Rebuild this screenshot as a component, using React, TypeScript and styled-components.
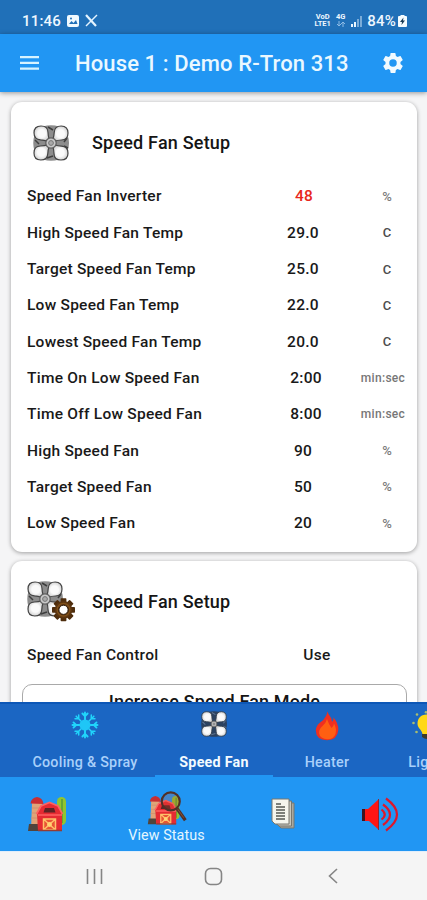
import React from "react";
import styled, { createGlobalStyle } from "styled-components";

const GlobalStyle = createGlobalStyle`
  *, *::before, *::after { box-sizing: border-box; }
  body { margin: 0; font-family: Roboto, "Liberation Sans", sans-serif; overflow: hidden; }
  svg { display: block; flex: none; }
`;

const Screen = styled.div`
  width: 427px;
  height: 900px;
  display: flex;
  flex-direction: column;
  overflow: hidden;
  background: #f5f5f6;
`;

const StatusBar = styled.header`
  height: 34px;
  flex: none;
  padding: 7px 20px 0 22px;
  display: flex;
  align-items: center;
  background: #2070b8;
  color: #eef7ff;
`;

const Clock = styled.span`
  width: 44px;
  font-size: 15px;
  font-weight: 500;
  letter-spacing: 0.2px;
`;

const StatusIcons = styled.div<{ $end?: boolean }>`
  display: flex;
  align-items: center;
  gap: ${(p) => (p.$end ? 5 : 6)}px;
  margin-left: ${(p) => (p.$end ? "auto" : "1px")};
`;

const NetworkLabel = styled.span`
  display: flex;
  flex-direction: column;
  align-items: center;
  font-size: 7.5px;
  line-height: 6.5px;
  font-weight: 700;
`;

const Battery = styled.span`
  display: flex;
  align-items: center;
  gap: 2px;
  font-size: 15px;
  font-weight: 500;
  letter-spacing: 0.2px;
`;

const AppBar = styled.div`
  height: 58px;
  flex: none;
  display: flex;
  align-items: center;
  padding: 0 22px 0 20px;
  background: #2196f3;
  box-shadow: 0 1px 5px rgba(0, 0, 0, 0.4);
  z-index: 1;
`;

const AppTitle = styled.h1`
  flex: 1;
  margin: 1px 0 0 36px;
  font-size: 22px;
  font-weight: 500;
  letter-spacing: 0.12px;
  line-height: 28px;
  white-space: nowrap;
  color: #eaf8ff;
`;

const Content = styled.main`
  flex: 1;
  min-height: 0;
  overflow: hidden;
  padding: 10px 10px 0 11px;
  display: flex;
  flex-direction: column;
  gap: 9px;
`;

const Card = styled.section<{ $height: number }>`
  height: ${(p) => p.$height}px;
  flex: none;
  background: #fff;
  border-radius: 11px;
  box-shadow: 0 1px 4px rgba(0, 0, 0, 0.36);
`;

const CardHeader = styled.div`
  height: 76.3px;
  display: flex;
  align-items: center;
  padding: 5px 16px 0 16px;
`;

const CardIcon = styled.div<{ $indent: number }>`
  width: 65px;
  padding-left: ${(p) => p.$indent}px;
`;

const CardTitle = styled.h2`
  margin: 0;
  font-size: 18px;
  font-weight: 500;
  letter-spacing: 0.2px;
  line-height: 24px;
  color: #151515;
`;

const Row = styled.div`
  height: 36.3px;
  display: grid;
  grid-template-columns: 242px 100px 64px;
  align-items: center;
  font-size: 15.5px;
  font-weight: 500;
  color: #191919;
`;

const RowLabel = styled.span`
  padding-left: 16px;
  letter-spacing: 0.25px;
  white-space: nowrap;
`;

const RowValue = styled.span<{ $shift?: number; $alert?: boolean }>`
  padding-left: ${(p) => (p.$shift ?? 0) * 2}px;
  text-align: center;
  letter-spacing: 0.3px;
  color: ${(p) => (p.$alert ? "#e8281c" : "inherit")};
`;

const RowUnit = styled.span<{ $tone: string; $wide?: boolean }>`
  text-align: center;
  padding-left: ${(p) => (p.$wide ? 0 : 4)}px;
  padding-right: ${(p) => (p.$wide ? 4 : 0)}px;
  font-size: ${(p) => (p.$wide ? 12 : 13)}px;
  letter-spacing: ${(p) => (p.$wide ? 0.3 : 0)}px;
  color: ${(p) => p.$tone};
`;

const ModeButton = styled.button`
  display: block;
  width: 385px;
  height: 36px;
  margin: 10.5px 0 0 11px;
  padding: 0;
  border: 1.3px solid #a9a9a9;
  border-radius: 10px;
  background: #fff;
  color: #151515;
  font: 500 18px/22px Roboto, sans-serif;
  letter-spacing: 0.15px;
  text-align: center;
`;

const Tabs = styled.nav`
  height: 75px;
  flex: none;
  display: flex;
  overflow: hidden;
  background: #1b66c3;
  border-top: 2px solid #0c57b7;
  padding-left: 15px;
`;

const Tab = styled.div<{ $width: number; $active?: boolean }>`
  width: ${(p) => p.$width}px;
  flex: none;
  display: flex;
  flex-direction: column;
  align-items: center;
  padding-top: 4px;
  border-bottom: 2px solid ${(p) => (p.$active ? "#2196f3" : "transparent")};
  color: ${(p) => (p.$active ? "#f3fbff" : "#a9d0fa")};
  font-size: 14.3px;
  font-weight: ${(p) => (p.$active ? 700 : 500)};
  letter-spacing: ${(p) => (p.$active ? 0.25 : 0.26)}px;
  line-height: 20px;
  white-space: nowrap;
`;

const TabIcon = styled.span`
  height: 44px;
  padding-top: 3px;
`;

const BottomNav = styled.nav`
  height: 74px;
  flex: none;
  display: grid;
  grid-template-columns: 107px 119px 115px 1fr;
  background: #2196f3;
`;

const NavItem = styled.div<{ $top: number; $indent?: number }>`
  display: flex;
  flex-direction: column;
  align-items: center;
  padding-top: ${(p) => p.$top}px;
  padding-right: ${(p) => p.$indent ?? 0}px;
  color: #e4f6ff;
  font-size: 14.3px;
  line-height: 19px;
  letter-spacing: 0.1px;
  white-space: nowrap;
`;

const SystemNav = styled.footer`
  height: 49px;
  flex: none;
  display: grid;
  grid-template-columns: 154px 84px 156px;
  justify-items: center;
  align-items: center;
  padding-left: 17px;
  background: #f5f5f5;
  border-top: 1px solid #e1eefb;
`;

/* Four-blade ventilation fan, optionally with a settings cog beside it. */
function FanIcon({ size, dark, cog }: { size: number; dark?: boolean; cog?: boolean }) {
  const id = dark ? "fanDark" : cog ? "fanCog" : "fan";
  return (
    <svg width={cog ? (size * 48) / 36 : size} height={cog ? (size * 41) / 36 : size} viewBox={cog ? "0 0 48 41" : "0 0 36 36"}>
      <defs>
        <radialGradient id={id} cx="50%" cy="48%" r="56%">
          <stop offset="0.45" stopColor="#fafafa" />
          <stop offset="0.8" stopColor="#dadada" />
          <stop offset="1" stopColor="#8c8c8c" />
        </radialGradient>
      </defs>
      <path d="M10 1.500Q18-1 26 1.500V9L18 15l-8-6zM10 34.500Q18 37 26 34.500V27l-8-6-8 6zM1.500 10Q-1 18 1.500 26h8l6-8-6-8zM34.500 10q3 8 0 16h-8l-6-8 6-8z" fill={dark ? "#2c4260" : "#8c8c8c"} />
      <path d="M15 2l5 3M14 33l6-2M2 15l4 4M31 17l3-4M31 21l4 2" stroke={dark ? "#5f7590" : "#3e3e3e"} strokeWidth="1.500" />
      {[0, 90, 180, 270].map((a) => (
        <path
          key={a}
          transform={`rotate(${a} 18 18)`}
          d="M1 7.800Q1 1 8 1Q15 1 15 7.500Q15 11.500 16.500 15L15 16.500Q11 14.800 7.500 14.800Q1 14.500 1 7.800Z"
          fill={`url(#${id})`}
          stroke={dark ? "#34404c" : "#444"}
          strokeWidth="1.200"
        />
      ))}
      <circle cx="18" cy="18" r={dark ? 4 : 5.2} fill="#c8c8c8" stroke="#5c5c5c" strokeWidth="1.200" />
      <circle cx="18" cy="18" r={dark ? 1.5 : 2.4} fill="#aaa" stroke="#777" />
      {cog && (
        <g>
          {[0, 45, 90, 135].map((a) => (
            <rect key={a} x="33.600" y="17.300" width="5.800" height="23" rx="0.800" fill="#4e2d0d" transform={`rotate(${a} 36.500 28.800)`} />
          ))}
          <circle cx="36.500" cy="28.800" r="8.800" fill="#5b3511" />
          <circle cx="36.500" cy="28.800" r="6.400" fill="none" stroke="#805019" strokeWidth="1.300" />
          <circle cx="36.500" cy="28.800" r="4.600" fill="#fff" stroke="#2e1907" />
        </g>
      )}
    </svg>
  );
}

function Snowflake() {
  return (
    <svg width="28" height="28" viewBox="-14 -14 28 28" fill="none" stroke="#20d4fb" strokeLinecap="round">
      {[0, 45, 90, 135, 180, 225, 270, 315].map((a) => (
        <path key={a} transform={`rotate(${a})`} d="M0 0V-12.500M-2.600-11.500L0-8.800L2.600-11.500" strokeWidth={a % 90 ? 1.500 : 1.900} />
      ))}
      <circle r="5.500" fill="#1fc6f6" stroke="none" />
    </svg>
  );
}

function Flame() {
  return (
    <svg width="24" height="30" viewBox="0 0 24 30">
      <path d="M12.500 .5Q13 3 15.500 6Q17 8 17 11Q18.800 9.500 18.500 6.500Q23.500 12 23.300 19Q22.500 29 12 29.300Q1 29 .8 19.500Q1 15 4.500 12Q9.500 8.500 11 5Q12 3 12.500 .5Z" fill="#f02f20" />
      <path d="M12 8Q14 14 16.500 17Q18.500 16 19 12.500Q22 18 20.500 23Q18.500 28.300 12.500 28.300Q5 28 4 22Q4 18 7.500 15Q11 12 12 8Z" fill="#ff5f12" />
    </svg>
  );
}

function Bulb() {
  return (
    <svg width="34" height="30" viewBox="0 0 34 30">
      <path d="M18.500 3.500C12.500 3.500 9.500 7.500 9.500 12.500C9.500 17.500 13.500 18 14.500 23H23.500C24.500 18 28.500 17 28.500 12.500C28.500 7.500 24.500 3.500 18.500 3.500Z" fill="#ffd817" />
      <path d="M14 23h10v3q-5 4-10 0z" fill="#3c392b" />
      <g fill="#a8bd70">
        <circle cx="9" cy="3.500" r="1.300" /><circle cx="5.500" cy="12" r="1.300" /><circle cx="8.500" cy="21" r="1.300" /><circle cx="18" cy="1.300" r="1.300" />
      </g>
    </svg>
  );
}

function Barn({ lens }: { lens?: boolean }) {
  return (
    <svg width={lens ? 40 : 39} height={lens ? 35 : 36} viewBox={lens ? "-1 -5 48 42" : "0 0 39 36"}>
      <rect x="29" y="1" width="9" height="28" rx="4.500" fill="#92c52f" />
      <path d="M34 3v24" stroke="#65a536" strokeWidth="2" />
      <path d="M4 7h10v27H3z" fill="#dfa478" />
      <path d="M4 12h9M4 17h9M3 22h9" stroke="#cf9070" />
      <path d="M2.500 7.500Q3 2 9 1q6 1 6.500 7z" fill="#c92e32" />
      <path d="M1 28h9v7H0z" fill="#51443c" />
      <path d="M9 18l4-8 8.500-4L30 10l4 8v17H10z" fill="#e52b32" />
      <path d="M8.500 18l4.500-8 8.500-3.500L30 10l4.500 8M10 19h24" fill="none" stroke="#ff6160" strokeWidth="1.700" />
      <path d="M17 12h9l1.500 4.500h-12z" fill="#5d2424" />
      <path d="M15.500 23h12v11h-12zM15.500 23l12 11M27.500 23l-12 11" fill="#e95435" stroke="#ffc069" strokeWidth="1.500" />
      <circle cx="21.500" cy="28.500" r="2.400" fill="#ffd373" />
      <path d="M10 34.500h24" stroke="#963b32" strokeWidth="1.500" />
      {lens && (
        <g fill="none" stroke="#513027">
          <circle cx="27.500" cy="7.500" r="10.800" strokeWidth="2.600" fill="#c94930" fillOpacity=".22" />
          <path d="M35 16L45 30" strokeWidth="4" />
          <path d="M36 17l7 10" stroke="#8a5537" strokeWidth="1.100" />
        </g>
      )}
    </svg>
  );
}

function Documents() {
  return (
    <svg width="26" height="31" viewBox="0 0 26 31" stroke="#78776f">
      <path d="M7 5h16v25H10l-3-3z" fill="#aaa99f" />
      <path d="M4.500 3h16v25H8l-3.500-3z" fill="#c8c7bd" />
      <path d="M1 1h17v25H4l-3-3z" fill="#f5f5ed" />
      <path d="M5 6h5M5 9h9M5 12h9M5 15h9M5 18h9M5 21h9" stroke="#555853" strokeWidth="1.400" />
    </svg>
  );
}

function Speaker() {
  return (
    <svg width="38" height="35" viewBox="0 0 38 35">
      <path d="M1 12h5v12H1z" fill="#3d1520" />
      <path d="M4 12h3L18 2v31L8 24H4z" fill="#ff1514" />
      <path d="M17.500 2v31" stroke="#98222f" />
      <g fill="none" stroke="#de172a" strokeWidth="2.200">
        <path d="M20.500 12.500Q27 17.500 20.500 22.500" />
        <path d="M22 7.500Q36 17.500 22 28" />
        <path d="M25 1.500Q47 17.500 25 33.500" />
      </g>
    </svg>
  );
}

type Reading = { label: string; value: string; unit: string; shift?: number; alert?: boolean; tone: string };

const readings: Reading[] = [
  { label: "Speed Fan Inverter", value: "48", unit: "%", shift: 1, alert: true, tone: "#7b7b7b" },
  { label: "High Speed Fan Temp", value: "29.0", unit: "C", tone: "#4c4c4c" },
  { label: "Target Speed Fan Temp", value: "25.0", unit: "C", tone: "#4c4c4c" },
  { label: "Low Speed Fan Temp", value: "22.0", unit: "C", tone: "#4c4c4c" },
  { label: "Lowest Speed Fan Temp", value: "20.0", unit: "C", tone: "#4c4c4c" },
  { label: "Time On Low Speed Fan", value: "2:00", unit: "min:sec", shift: 3, tone: "#777" },
  { label: "Time Off Low Speed Fan", value: "8:00", unit: "min:sec", shift: 3, tone: "#777" },
  { label: "High Speed Fan", value: "90", unit: "%", tone: "#7b7b7b" },
  { label: "Target Speed Fan", value: "50", unit: "%", tone: "#7b7b7b" },
  { label: "Low Speed Fan", value: "20", unit: "%", tone: "#7b7b7b" },
];

export default function App() {
  return (
    <Screen>
      <GlobalStyle />
      <StatusBar>
        <Clock>11:46</Clock>
        <StatusIcons>
          <svg width="12" height="12" viewBox="0 0 12 12">
            <rect width="12" height="12" rx="2" fill="#f0faff" />
            <path d="M2 9l2.500-3 2 2L9 5l1.500 4z" fill="#2070b8" />
            <circle cx="4" cy="3.500" r="1" fill="#2070b8" />
          </svg>
          <svg width="13" height="13" viewBox="0 0 13 13" fill="none" stroke="#e4f4ff">
            <path d="M1 1l10 11" strokeWidth="2.200" />
            <path d="M12 1L1 12" strokeWidth="1.500" />
          </svg>
        </StatusIcons>
        <StatusIcons $end>
          <NetworkLabel><span>VoD</span><span>LTE1</span></NetworkLabel>
          <NetworkLabel>
            <span>4G</span>
            <svg width="8" height="6" viewBox="0 0 8 6" stroke="#8dbbe5" fill="none"><path d="M2 0v5M0 3l2 2 2-2M6 6V1M4 3l2-2 2 2" /></svg>
          </NetworkLabel>
          <svg width="12" height="12" viewBox="0 0 12 12" fill="#e9f6ff">
            <path d="M1 9h2v3H1zM4 7h2v5H4z" /><path d="M7 4h2v8H7zM10 1h2v11h-2z" opacity=".45" />
          </svg>
          <Battery>
            84%
            <svg width="9" height="12" viewBox="0 0 9 12">
              <path d="M2.500 0h4v1H8q1 0 1 1v9q0 1-1 1H1q-1 0-1-1V2q0-1 1-1h1.500z" fill="#f4fbff" />
              <path d="M5.500 2.500L2 7h2l-.5 3L7 5.500H5z" fill="#183953" />
            </svg>
          </Battery>
        </StatusIcons>
      </StatusBar>
      <AppBar>
        <svg width="19" height="14" viewBox="0 0 19 14" fill="#d6f3ff">
          <path d="M0 0h19v2.300H0zM0 5.700h19V8H0zM0 11.400h19v2.300H0z" />
        </svg>
        <AppTitle>House 1 : Demo R-Tron 313</AppTitle>
        <svg width="24" height="24" viewBox="0.500 0.500 23 23" fill="#f1faff">
          <path d="M19.140 12.940c.04-.3.060-.61.060-.94s-.02-.64-.07-.94l2.030-1.580a.49.49 0 0 0 .12-.61l-1.920-3.320a.49.49 0 0 0-.59-.22l-2.390.96a7 7 0 0 0-1.620-.94l-.36-2.540A.48.48 0 0 0 13.920 2.400h-3.840c-.24 0-.43.170-.47.410l-.36 2.540c-.59.240-1.130.570-1.620.94l-2.390-.96a.48.48 0 0 0-.59.220L2.740 8.870a.48.48 0 0 0 .12.610l2.030 1.580c-.05.3-.09.63-.09.94s.02.640.070.94l-2.030 1.580a.49.49 0 0 0-.12.610l1.920 3.320c.12.220.37.290.59.220l2.390-.96c.5.380 1.030.7 1.620.94l.36 2.540c.05.240.24.410.48.410h3.840c.24 0 .44-.17.470-.41l.36-2.540a7 7 0 0 0 1.620-.94l2.390.96c.22.080.47 0 .59-.22l1.920-3.320a.47.47 0 0 0-.12-.61zM12 15.600A3.600 3.600 0 1 1 12 8.400a3.600 3.600 0 0 1 0 7.200z" />
        </svg>
      </AppBar>
      <Content>
        <Card $height={450}>
          <CardHeader>
            <CardIcon $indent={6}><FanIcon size={36} /></CardIcon>
            <CardTitle>Speed Fan Setup</CardTitle>
          </CardHeader>
          {readings.map((r) => (
            <Row key={r.label}>
              <RowLabel>{r.label}</RowLabel>
              <RowValue $shift={r.shift} $alert={r.alert}>{r.value}</RowValue>
              <RowUnit $tone={r.tone} $wide={r.unit.length > 1}>{r.unit}</RowUnit>
            </Row>
          ))}
        </Card>
        <Card $height={300}>
          <CardHeader>
            <CardIcon $indent={0}><FanIcon size={36} cog /></CardIcon>
            <CardTitle>Speed Fan Setup</CardTitle>
          </CardHeader>
          <Row>
            <RowLabel>Speed Fan Control</RowLabel>
            <RowValue $shift={14}>Use</RowValue>
          </Row>
          <ModeButton>Increase Speed Fan Mode</ModeButton>
        </Card>
      </Content>
      <Tabs>
        <Tab $width={140}><TabIcon><Snowflake /></TabIcon>Cooling &amp; Spray</Tab>
        <Tab $width={118} $active><TabIcon><FanIcon size={26} dark /></TabIcon>Speed Fan</Tab>
        <Tab $width={108}><TabIcon><Flame /></TabIcon>Heater</Tab>
        <Tab $width={88}><TabIcon><Bulb /></TabIcon>Light</Tab>
      </Tabs>
      <BottomNav>
        <NavItem $top={19} $indent={12}><Barn /></NavItem>
        <NavItem $top={14}><Barn lens />View Status</NavItem>
        <NavItem $top={21}><Documents /></NavItem>
        <NavItem $top={20} $indent={8}><Speaker /></NavItem>
      </BottomNav>
      <SystemNav>
        <svg width="17" height="17" viewBox="0 0 17 17" stroke="#858585" strokeWidth="1.600"><path d="M1.500 1v15M8.500 1v15M15.500 1v15" /></svg>
        <svg width="19" height="19" viewBox="0 0 19 19" fill="none" stroke="#858585" strokeWidth="1.600"><rect x="1.500" y="1.500" width="16" height="16" rx="5" /></svg>
        <svg width="10" height="16" viewBox="0 0 10 16" fill="none" stroke="#858585" strokeWidth="1.600"><path d="M9 1L1.500 8L9 15" /></svg>
      </SystemNav>
    </Screen>
  );
}
